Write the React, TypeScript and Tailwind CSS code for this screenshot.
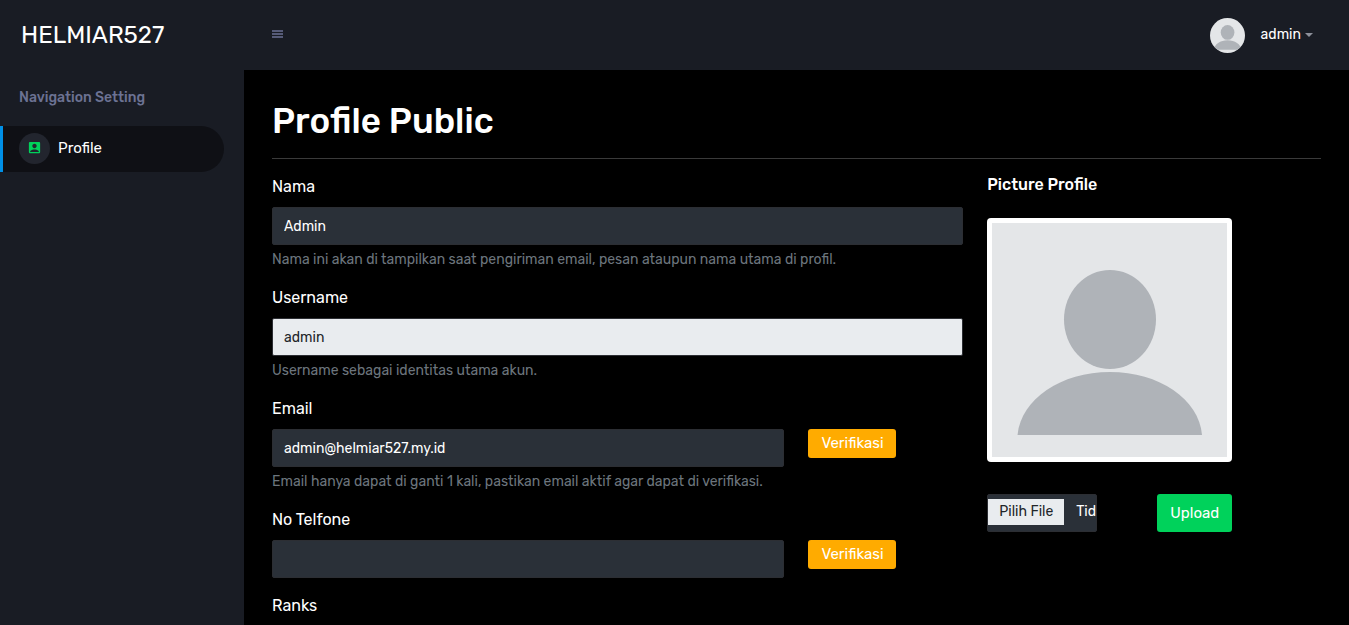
import type { ReactNode } from "react";
import { MdAccountBox } from "react-icons/md";

function Avatar({ className, label }: { className: string; label: string }) {
  return (
    <svg viewBox="0 0 235 234" preserveAspectRatio="none" className={className} role="img" aria-label={label}>
      <rect width="235" height="234" fill="#e4e6e8" />
      <ellipse cx="118" cy="96.500" rx="46" ry="49.500" fill="#afb3b8" />
      <path d="M25.500 212C29 176 69 149 118 149s89 27 92 63z" fill="#afb3b8" />
    </svg>
  );
}

const inputBase = "block h-[38px] w-full rounded-xs border px-[11px] text-sm outline-none";
const inputDark = "border-[#2c2e33] bg-[#2a3038] text-white";
const inputDisabled = "border-[#2c2e33] bg-[#e9ecef] text-[#212529]";

function Field({ id, label, hint, children }: { id: string; label: string; hint?: string; children: ReactNode }) {
  return (
    <div className="mb-4">
      <label htmlFor={id} className="mb-2 block text-base leading-6">
        {label}
      </label>
      {children}
      {hint && <p className="mt-1 text-sm leading-[21px] text-[#6c757d]">{hint}</p>}
    </div>
  );
}

function VerifyButton() {
  return (
    <button type="button" className="h-[29px] w-[88px] rounded-[3px] bg-[#ffab00] text-[15px] leading-[29px] text-white">
      Verifikasi
    </button>
  );
}

export default function App() {
  return (
    <div className="flex min-h-screen bg-black font-['Rubik','Roboto',sans-serif] text-white">
      <aside className="w-[244px] shrink-0 bg-[#191c24]">
        <a href="#" className="flex h-[70px] items-center pl-[21px] text-2xl">
          HELMIAR527
        </a>
        <nav className="pt-4">
          <h2 className="mb-4 pl-[19px] text-sm leading-6 font-medium text-[#6c7293]">Navigation Setting</h2>
          <a
            href="#"
            className="mr-5 flex h-[46px] items-center gap-2 rounded-r-full border-l-3 border-[#0090e7] bg-[#0f1015] pb-0.5 pl-4 text-[15px]"
          >
            <span className="flex size-[31px] items-start justify-center rounded-full bg-[#22252e] pt-[7px]">
              <MdAccountBox className="size-[15px] text-[#00d25b]" />
            </span>
            Profile
          </a>
        </nav>
      </aside>

      <div className="flex min-w-0 grow flex-col">
        <header className="flex h-[70px] items-center justify-between bg-[#191c24] pr-9 pl-7">
          <button type="button" aria-label="Toggle sidebar" className="pb-0.5 text-[#565b78]">
            <svg viewBox="0 0 12 8" className="h-2 w-3" fill="currentColor" shapeRendering="crispEdges">
              <path d="M0 0h11v2H0zM0 3h11v2H0zM0 6h11v2H0z" />
            </svg>
          </button>
          <button type="button" className="flex items-center text-sm">
            <Avatar label="admin avatar" className="mr-4 size-[35px] rounded-full" />
            <span>admin</span>
            <svg viewBox="0 0 8 4" className="ml-1 h-1 w-2" fill="#8d909a">
              <path d="M0 0h8L4 4z" />
            </svg>
          </button>
        </header>

        <main className="px-7 pt-[29px]">
          <h1 className="border-b border-[#3a3a3a] pb-[15px] text-[35px] leading-[44px] font-medium">Profile Public</h1>

          <div className="mt-4 grid grid-cols-3 gap-6">
            <form className="col-span-2">
              <Field
                id="name"
                label="Nama"
                hint="Nama ini akan di tampilkan saat pengiriman email, pesan ataupun nama utama di profil."
              >
                <input id="name" type="text" defaultValue="Admin" className={`${inputBase} ${inputDark}`} />
              </Field>
              <Field id="username" label="Username" hint="Username sebagai identitas utama akun.">
                <input id="username" type="text" defaultValue="admin" disabled className={`${inputBase} ${inputDisabled}`} />
              </Field>
              <Field
                id="email"
                label="Email"
                hint="Email hanya dapat di ganti 1 kali, pastikan email aktif agar dapat di verifikasi."
              >
                <div className="grid grid-cols-4 items-start gap-6">
                  <div className="col-span-3">
                    <input id="email" type="email" defaultValue="admin@helmiar527.my.id" className={`${inputBase} ${inputDark}`} />
                  </div>
                  <VerifyButton />
                </div>
              </Field>
              <Field id="phone" label="No Telfone">
                <div className="grid grid-cols-4 items-start gap-6">
                  <div className="col-span-3">
                    <input id="phone" type="tel" className={`${inputBase} ${inputDark}`} />
                  </div>
                  <VerifyButton />
                </div>
              </Field>
              <p className="text-base leading-6">Ranks</p>
            </form>

            <section>
              <h2 className="text-base leading-5 font-medium">Picture Profile</h2>
              <div className="mt-[23px] w-[245px]">
                <div className="rounded-sm bg-white p-[5px]">
                  <Avatar label="Picture Profile" className="h-[234px] w-full" />
                </div>
                <form className="mt-8 flex justify-between">
                  <label
                    htmlFor="picture"
                    className="relative flex h-[38px] w-[110px] items-start overflow-hidden rounded-xs border border-[#2c2e33] bg-[#2a3038] pt-1 text-sm leading-[26px] whitespace-nowrap"
                  >
                    <span className="mr-3 shrink-0 bg-[#e9ecef] px-[11px] text-[#212529]">Pilih File</span>
                    <span className="min-w-0 overflow-hidden">Tid</span>
                    <input id="picture" type="file" className="sr-only" />
                  </label>
                  <button type="submit" className="h-[38px] w-[75px] rounded-[3px] bg-[#00d25b] text-[15px]">
                    Upload
                  </button>
                </form>
              </div>
            </section>
          </div>
        </main>
      </div>
    </div>
  );
}
